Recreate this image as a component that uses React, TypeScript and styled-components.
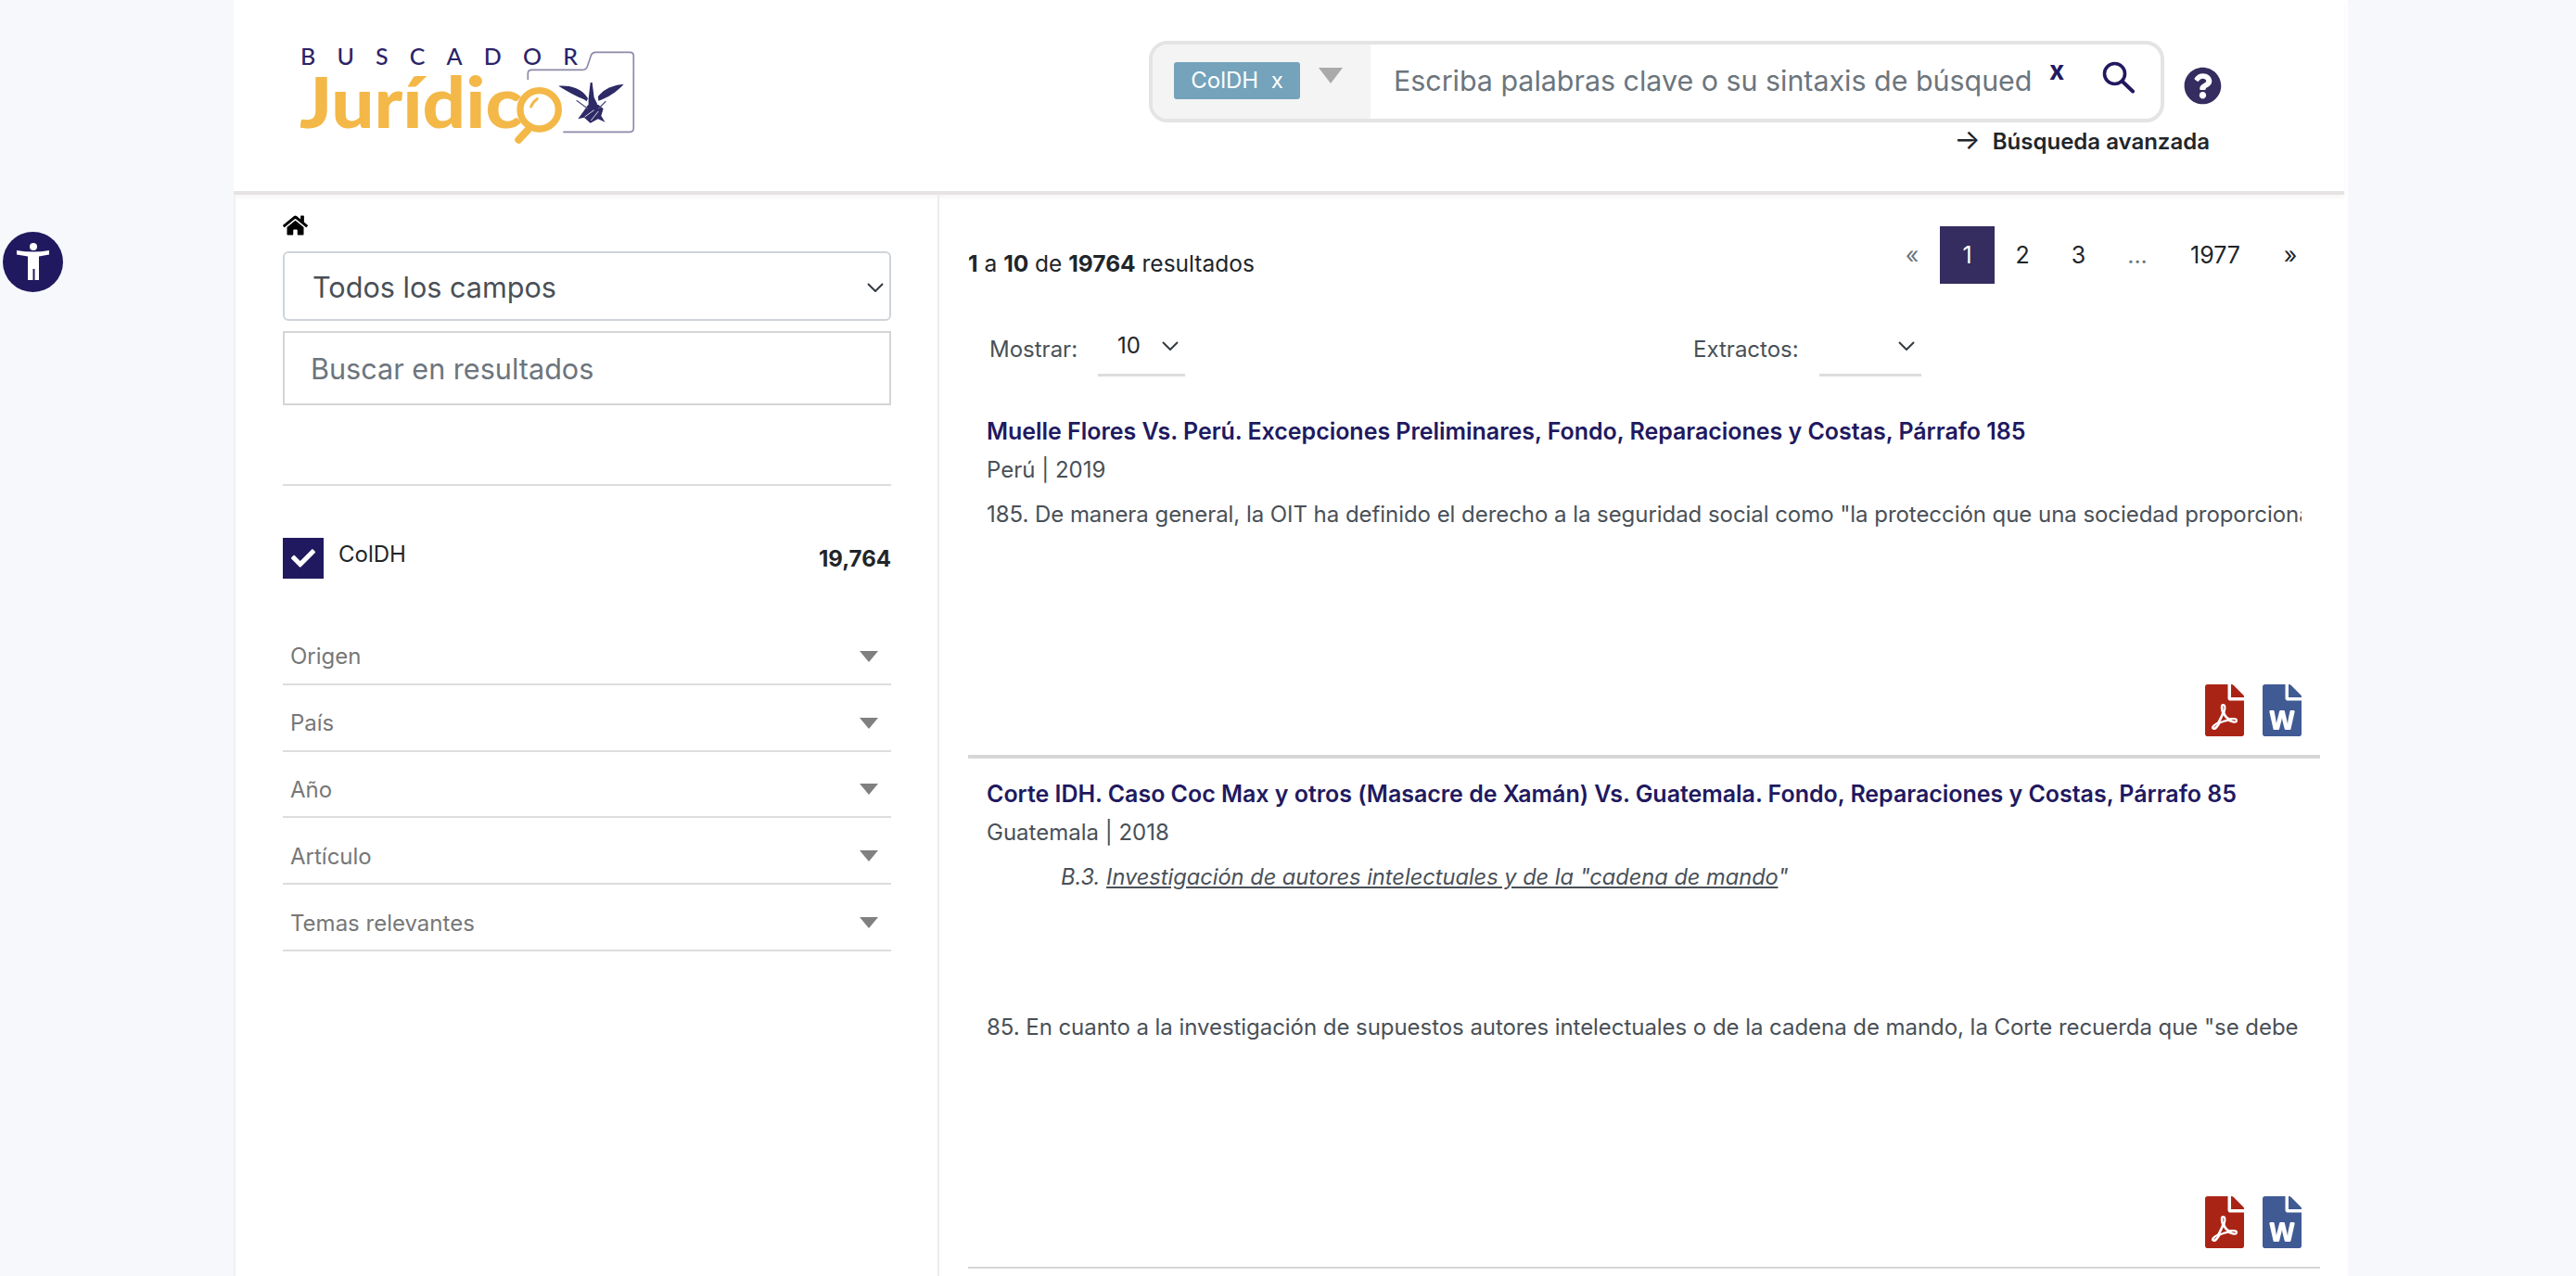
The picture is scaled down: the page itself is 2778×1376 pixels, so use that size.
import React from 'react';
import styled, { createGlobalStyle } from 'styled-components';
import { FaCheck, FaFilePdf, FaFileWord, FaHome, FaQuestionCircle } from 'react-icons/fa';

const GlobalStyle = createGlobalStyle`
  html, body {
    margin: 0;
    padding: 0;
    height: 1376px;
    overflow: hidden;
    background: #f7f8fc;
    font-family: Inter, "Liberation Sans", sans-serif;
  }
  * { box-sizing: border-box; }
`;

const Logo = () => (
  <LogoSvg viewBox="0 0 420 150" width={420} height={150}>
    <text x="44" y="50" fontFamily="Lato, sans-serif" fontWeight="500" fontSize="25" fill="#2b2468" textLength="299">BUSCADOR</text>
    <text x="43" y="118" fontFamily="Lato, sans-serif" fontWeight="900" fontSize="76" fill="#f3b847" textLength="240" lengthAdjust="spacingAndGlyphs">Jurídic</text>
    <g transform="scale(0.3333)">
      <circle cx="905" cy="295" r="62" fill="none" stroke="#f3b847" strokeWidth="22" />
      <path d="M868 360 L838 392" stroke="#f3b847" strokeWidth="24" strokeLinecap="round" />
      <path d="M878 285 Q885 268 898 260" stroke="#f3b847" strokeWidth="9" fill="none" strokeLinecap="round" />
      <path d="M868 198 V178 Q868 166 880 166 H1045 Q1056 166 1060 156 L1072 120 Q1076 109 1088 109 H1198 Q1210 109 1210 121 V355 Q1210 367 1198 367 H982" fill="none" stroke="#8b89a8" strokeWidth="5" />
      <path d="M967 218 C1000 216 1040 222 1062 258 L1058 268 L1050 262 C1025 252 995 235 967 218Z" fill="#2d2a66" />
      <path d="M1178 212 C1150 214 1115 225 1095 252 L1096 266 C1125 256 1155 238 1178 212Z" fill="#2d2a66" />
      <path d="M1070 208 L1076 206 L1082 255 L1092 275 L1090 285 L1064 285 L1064 260Z" fill="#2d2a66" />
      <path d="M1030 325 L1048 300 L1062 280 L1095 278 L1112 292 L1105 315 L1118 335 L1095 325 L1070 338 L1050 320Z" fill="#2d2a66" />
      <path d="M1025 265 L1062 292 M1120 268 L1096 292" stroke="#55537f" strokeWidth="4" />
      <path d="M1052 318 L1082 296 M1072 330 L1096 300" stroke="#fff" strokeWidth="2.5" />
    </g>
  </LogoSvg>
);

const AccessIcon = () => (
  <svg viewBox="0 0 65 65" width={65} height={65}>
    <circle cx="32.5" cy="32.5" r="32.5" fill="#21195f" />
    <circle cx="33" cy="16" r="4" fill="#fff" />
    <path d="M15 20 Q33 23 50 20 V24.5 L39 26.5 V52 H34.5 V40 H32.5 V52 H27 V26.5 L15 24.5Z" fill="#fff" />
  </svg>
);

const SearchGlyph = () => (
  <SearchSvg viewBox="0 0 36 36" width={36} height={36}>
    <circle cx="13.5" cy="13.5" r="11" fill="none" stroke="#21195f" strokeWidth="3.6" />
    <path d="M21.5 21.5 L33 32.5" stroke="#21195f" strokeWidth="4" strokeLinecap="round" />
  </SearchSvg>
);

const Chevron = () => (
  <svg viewBox="0 0 18 10" width={18} height={10}>
    <path d="M1 1 L9 9 L17 1" fill="none" stroke="#343a40" strokeWidth="2" />
  </svg>
);

const filters = ['Origen', 'País', 'Año', 'Artículo', 'Temas relevantes'];

const pages = [
  { label: '«', width: 60, muted: true },
  { label: '1', width: 59, active: true },
  { label: '2', width: 60 },
  { label: '3', width: 61 },
  { label: '...', width: 66, muted: true },
  { label: '1977', width: 102 },
  { label: '»', width: 60 },
];

const FileLinks = () => (
  <FileRow>
    <PdfIcon />
    <WordIcon />
  </FileRow>
);

export default function App() {
  return (
    <>
      <GlobalStyle />
      <AccessButton><AccessIcon /></AccessButton>
      <Panel>
        <Header>
          <Logo />
          <SearchColumn>
            <SearchRow>
              <SearchBox>
                <ChipArea>
                  <Chip>ColDH&nbsp; x</Chip>
                  <ChipCaret />
                </ChipArea>
                <Placeholder>Escriba palabras clave o su sintaxis de búsqued</Placeholder>
                <ClearX>x</ClearX>
                <SearchGlyph />
              </SearchBox>
              <HelpIcon />
            </SearchRow>
            <Advanced><span>→</span>Búsqueda avanzada</Advanced>
          </SearchColumn>
        </Header>
        <Body>
          <Sidebar>
            <HomeIcon />
            <FieldSelect>
              Todos los campos
              <Chevron />
            </FieldSelect>
            <ResultSearch>Buscar en resultados</ResultSearch>
            <SideRule />
            <SourceRow>
              <CheckBox><FaCheck /></CheckBox>
              <SourceName>ColDH</SourceName>
              <SourceCount>19,764</SourceCount>
            </SourceRow>
            <FilterList>
              {filters.map(name => (
                <FilterRow key={name}>
                  {name}
                  <FilterCaret />
                </FilterRow>
              ))}
            </FilterList>
          </Sidebar>
          <Results>
            <TopRow>
              <Count><b>1</b> a <b>10</b> de <b>19764</b> resultados</Count>
              <Pagination>
                {pages.map(page => (
                  <PageItem key={page.label} $width={page.width} $active={page.active} $muted={page.muted}>
                    {page.label}
                  </PageItem>
                ))}
              </Pagination>
            </TopRow>
            <OptionsRow>
              <OptionLabel>Mostrar:</OptionLabel>
              <OptionSelect $width={94}>10<Chevron /></OptionSelect>
              <ExtractLabel>Extractos:</ExtractLabel>
              <OptionSelect $width={110}><Chevron /></OptionSelect>
            </OptionsRow>
            <FirstResult>
              <ResultTitle>Muelle Flores Vs. Perú. Excepciones Preliminares, Fondo, Reparaciones y Costas, Párrafo 185</ResultTitle>
              <ResultMeta>Perú | 2019</ResultMeta>
              <Extract>185. De manera general, la OIT ha definido el derecho a la seguridad social como "la protección que una sociedad proporciona</Extract>
              <FileLinks />
            </FirstResult>
            <Result>
              <ResultTitle>Corte IDH. Caso Coc Max y otros (Masacre de Xamán) Vs. Guatemala. Fondo, Reparaciones y Costas, Párrafo 85</ResultTitle>
              <ResultMeta>Guatemala | 2018</ResultMeta>
              <SectionHeading>B.3. <u>Investigación de autores intelectuales y de la "cadena de mando</u>"</SectionHeading>
              <Extract>85. En cuanto a la investigación de supuestos autores intelectuales o de la cadena de mando, la Corte recuerda que "se debe</Extract>
              <FileLinks />
            </Result>
          </Results>
        </Body>
      </Panel>
    </>
  );
}

const AccessButton = styled.div`
  position: absolute;
  left: 3px;
  top: 250px;
  width: 65px;
  height: 65px;
`;

const Panel = styled.div`
  margin-left: 252px;
  width: 2280px;
  height: 1376px;
  background: #fff;
  overflow: hidden;
`;

const Header = styled.header`
  height: 210px;
  margin-right: 4px;
  display: flex;
  align-items: flex-start;
  padding: 20px 0 0 28px;
  border-bottom: 4px solid #e6e3e3;
  box-shadow: 0 3px 5px rgba(0, 0, 0, 0.04);
`;

const LogoSvg = styled.svg`
  flex: none;
`;

const SearchSvg = styled.svg`
  flex: none;
  margin-top: -8px;
`;

const SearchColumn = styled.div`
  margin: 24px 0 0 539px;
  width: 1157px;
  display: flex;
  flex-direction: column;
`;

const SearchRow = styled.div`
  display: flex;
  align-items: flex-start;
`;

const SearchBox = styled.div`
  width: 1097px;
  height: 88px;
  border: 4px solid #e4e4e4;
  border-radius: 20px;
  display: flex;
  align-items: center;
  overflow: hidden;
  background: #fff;
`;

const ChipArea = styled.div`
  width: 235px;
  height: 100%;
  flex: none;
  background: #f4f4f4;
  display: flex;
  align-items: flex-start;
  padding: 19px 0 0 23px;
`;

const Chip = styled.div`
  width: 136px;
  height: 40px;
  border-radius: 3px;
  background: #74a3bb;
  color: #fff;
  font-size: 24px;
  line-height: 40px;
  text-align: center;
`;

const ChipCaret = styled.div`
  margin: 6px 0 0 20px;
  width: 0;
  height: 0;
  border-left: 13px solid transparent;
  border-right: 13px solid transparent;
  border-top: 17px solid #aaa;
`;

const Placeholder = styled.div`
  margin: -3px 0 0 25px;
  width: 689px;
  flex: none;
  font-size: 30.4px;
  color: #6c757d;
  white-space: nowrap;
  overflow: hidden;
`;

const ClearX = styled.div`
  margin: -24px 41px 0 18px;
  font-size: 28px;
  font-weight: 700;
  color: #21195f;
`;

const HelpIcon = styled(FaQuestionCircle)`
  margin: 28px 0 0 21px;
  width: 41px;
  height: 41px;
  color: #352c5f;
`;

const Advanced = styled.div`
  align-self: flex-end;
  margin: 6px 13px 0 0;
  font-size: 24px;
  font-weight: 600;
  color: #212529;
  line-height: 30px;

  span {
    margin-right: 13px;
    font-size: 30px;
    font-weight: 400;
    line-height: 24px;
  }
`;

const Body = styled.div`
  display: flex;
  height: 1166px;
  border-left: 2px solid #f0f0f3;
`;

const Sidebar = styled.aside`
  width: 759px;
  flex: none;
  padding: 21px 50px 0 51px;
  border-right: 2px solid #ececec;
  display: flex;
  flex-direction: column;
`;

const HomeIcon = styled(FaHome)`
  width: 27px;
  height: 24px;
  color: #000;
`;

const FieldSelect = styled.div`
  margin-top: 16px;
  height: 75px;
  border: 2px solid #ced4da;
  border-radius: 6px;
  padding: 2px 6px 0 30px;
  display: flex;
  align-items: center;
  justify-content: space-between;
  font-size: 30.6px;
  color: #495057;
`;

const ResultSearch = styled.div`
  margin-top: 11px;
  height: 80px;
  border: 2px solid #d5d5d5;
  padding-left: 28px;
  display: flex;
  align-items: center;
  font-size: 30.6px;
  color: #6c757d;
`;

const SideRule = styled.div`
  margin-top: 85px;
  height: 2px;
  background: #ddd;
`;

const SourceRow = styled.div`
  margin-top: 56px;
  display: flex;
  align-items: flex-start;
  font-size: 24px;
  color: #212529;
`;

const CheckBox = styled.div`
  width: 44px;
  height: 44px;
  background: #21195f;
  color: #fff;
  font-size: 26px;
  display: flex;
  align-items: center;
  justify-content: center;
`;

const SourceName = styled.div`
  margin: 3px 0 0 16px;
  line-height: 30px;
`;

const SourceCount = styled.div`
  margin: 8px 0 0 auto;
  line-height: 30px;
  font-weight: 700;
`;

const FilterList = styled.div`
  margin-top: 43px;
`;

const FilterRow = styled.div`
  height: 71.8px;
  padding: 12px 14px 0 8px;
  border-bottom: 2px solid #ddd;
  display: flex;
  align-items: center;
  justify-content: space-between;
  font-size: 24px;
  color: #777;
`;

const FilterCaret = styled.div`
  width: 0;
  height: 0;
  border-left: 10px solid transparent;
  border-right: 10px solid transparent;
  border-top: 12px solid #808080;
`;

const Results = styled.main`
  flex: 1;
  min-width: 0;
  padding: 34px 30px 0 31px;
  display: flex;
  flex-direction: column;
`;

const TopRow = styled.div`
  display: flex;
  justify-content: space-between;
  align-items: flex-start;
  padding-right: 2px;
`;

const Count = styled.div`
  margin-top: 25px;
  font-size: 24.5px;
  line-height: 30px;
  color: #212529;
`;

const Pagination = styled.nav`
  display: flex;
`;

const PageItem = styled.div<{ $width: number; $active?: boolean; $muted?: boolean }>`
  width: ${p => p.$width}px;
  height: 62px;
  display: flex;
  align-items: center;
  justify-content: center;
  font-size: 25px;
  background: ${p => (p.$active ? '#352c5f' : 'transparent')};
  color: ${p => (p.$active ? '#fff' : p.$muted ? '#6c757d' : '#212529')};
`;

const OptionsRow = styled.div`
  margin-top: 36px;
  height: 64px;
  padding-left: 23px;
  display: flex;
  align-items: flex-start;
`;

const OptionLabel = styled.div`
  width: 117px;
  margin-top: 20px;
  font-size: 24px;
  line-height: 30px;
  color: #495057;
`;

const ExtractLabel = styled(OptionLabel)`
  width: 136px;
  margin-left: 548px;
`;

const OptionSelect = styled.div<{ $width: number }>`
  width: ${p => p.$width}px;
  height: 64px;
  padding: 0 7px 0 21px;
  border-bottom: 3px solid #ddd;
  display: flex;
  align-items: center;
  justify-content: space-between;
  font-size: 24px;
  color: #212529;

  &:last-child {
    justify-content: flex-end;
  }
`;

const Result = styled.article`
  height: 550px;
  flex: none;
  padding: 21px 20px 20px 20px;
  border-bottom: 2px solid #d6d6d6;
  display: flex;
  flex-direction: column;
`;

const FirstResult = styled(Result)`
  height: 412px;
  padding-top: 42px;
  border-bottom-width: 4px;
`;

const ResultTitle = styled.h3`
  margin: 0;
  font-size: 25px;
  letter-spacing: -0.03px;
  line-height: 34px;
  font-weight: 600;
  color: #21195f;
  white-space: nowrap;
`;

const ResultMeta = styled.div`
  margin-top: 8px;
  font-size: 24px;
  line-height: 34px;
  color: #495057;
`;

const Extract = styled.p`
  margin: 14px 0 0;
  font-size: 24px;
  letter-spacing: -0.05px;
  line-height: 34px;
  color: #495057;
  white-space: nowrap;
  overflow: hidden;
`;

const SectionHeading = styled.p`
  margin: 14px 0 114px;
  padding-left: 80px;
  font-size: 23.6px;
  line-height: 34px;
  font-style: italic;
  color: #495057;
`;

const FileRow = styled.div`
  margin-top: auto;
  display: flex;
  justify-content: flex-end;
  gap: 20px;
`;

const PdfIcon = styled(FaFilePdf)`
  width: 42px;
  height: 56px;
  color: #aa2415;
`;

const WordIcon = styled(FaFileWord)`
  width: 42px;
  height: 56px;
  color: #405a94;
`;
